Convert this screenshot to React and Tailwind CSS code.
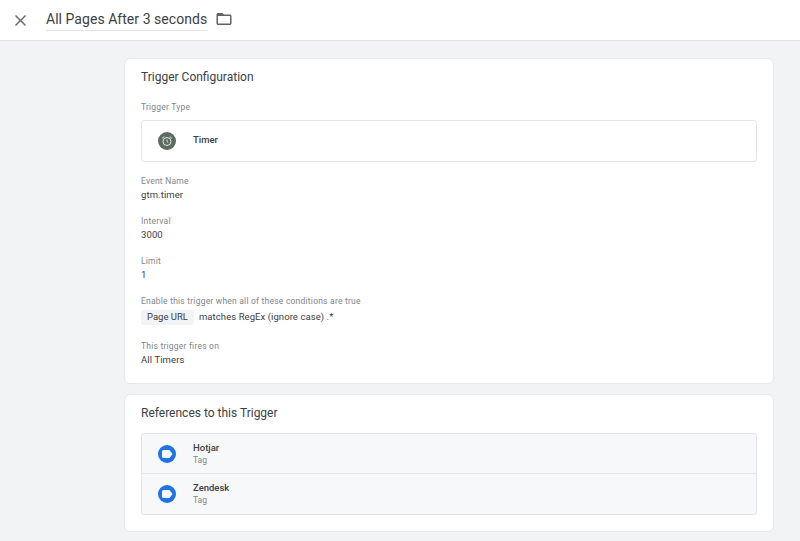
const fields = [
  { label: "Event Name", value: "gtm.timer" },
  { label: "Interval", value: "3000" },
  { label: "Limit", value: "1" },
];

const references = [
  { name: "Hotjar", type: "Tag" },
  { name: "Zendesk", type: "Tag" },
];

const CloseIcon = () => (
  <svg className="ml-[11px] shrink-0" width="19" height="19" viewBox="0 0 24 24" fill="#6b7074">
    <path d="M19 6.41 17.59 5 12 10.59 6.41 5 5 6.41 10.59 12 5 17.59 6.41 19 12 13.41 17.59 19 19 17.59 13.41 12z" />
  </svg>
);

const FolderIcon = () => (
  <svg className="ml-[8px] mb-[3px] shrink-0" width="18" height="18" viewBox="0 0 24 24" fill="#5f6368">
    <path d="M20 6h-8l-2-2H4c-1.1 0-2 .9-2 2v12c0 1.1.9 2 2 2h16c1.1 0 2-.9 2-2V8c0-1.1-.9-2-2-2zm0 12H4V8h16v10z" />
  </svg>
);

const TimerIcon = () => (
  <div className="w-[18px] h-[18px] rounded-full bg-[#5b6b60] flex items-center justify-center">
    <svg width="12" height="12" viewBox="0 0 24 24" fill="none" stroke="#e4e8e5" strokeWidth="2">
      <circle cx="12" cy="13" r="8" />
      <path d="M12 9v4l2.5 2" />
      <path d="M2.5 6.5 6.5 3M21.5 6.5 17.5 3" />
    </svg>
  </div>
);

const TagIcon = () => (
  <div className="w-[18px] h-[18px] rounded-full bg-[#1f73e8] flex items-center justify-center">
    <svg width="12" height="10" viewBox="0 0 12 10">
      <path d="M2.5 1h6L11.5 5l-3 4h-6A1.5 1.5 0 0 1 1 7.5v-5A1.5 1.5 0 0 1 2.5 1z" fill="#f7f8fa" />
    </svg>
  </div>
);

const Label = ({ children }) => (
  <div className="text-[8.5px] leading-[12px] tracking-[0.22px] text-[#80868b]">{children}</div>
);

const Value = ({ children }) => (
  <div className="mt-[1px] text-[9.5px] leading-[14px] tracking-[0.1px] text-[#3c4043]">{children}</div>
);

const App = () => {
  return (
    <div className="w-[800px] h-[541px] overflow-hidden bg-[#f1f3f4] font-['Roboto',sans-serif]">
      {/* Cabecera */}
      <div className="h-[41px] bg-white border-b border-[#e0e2e5] flex items-center">
        <CloseIcon />
        <div className="ml-[16px] self-start mt-[8px] w-[161px] h-[23px] shrink-0 flex items-center border-b border-[#e3e5e8] whitespace-nowrap text-[14px] tracking-[0.04px] text-[#3c4043]">
          All Pages After 3 seconds
        </div>
        <FolderIcon />
      </div>

      <div className="ml-[124px] w-[650px] pt-[17px] flex flex-col gap-[10px]">
        {/* Configuración */}
        <div className="h-[326px] bg-white rounded-[6px] border border-[#e6e8ea] px-[16px] pt-[10px]">
          <div className="text-[12px] leading-[16px] text-[#3c4043]">Trigger Configuration</div>
          <div className="mt-[16px]">
            <Label>Trigger Type</Label>
          </div>
          <div className="mt-[7px] h-[42px] rounded-[3px] border border-[#e3e5e8] flex items-center pl-[16px]">
            <TimerIcon />
            <div className="ml-[17px] mb-[2px] text-[9.5px] font-medium text-[#3c4043]">Timer</div>
          </div>
          <div className="mt-[13px] flex flex-col gap-[13px]">
            {fields.map((field) => (
              <div key={field.label}>
                <Label>{field.label}</Label>
                <Value>{field.value}</Value>
              </div>
            ))}
          </div>
          <div className="mt-[13px]">
            <Label>Enable this trigger when all of these conditions are true</Label>
          </div>
          <div className="mt-[3px] flex items-center">
            <div className="h-[15px] px-[6px] rounded-[2px] bg-[#f1f3f4] flex items-center text-[9.5px] text-[#3c4043]">
              Page URL
            </div>
            <div className="ml-[5px] text-[9.5px] tracking-[0.07px] text-[#3c4043]">matches RegEx (ignore case) .*</div>
          </div>
          <div className="mt-[15px]">
            <Label>This trigger fires on</Label>
            <Value>All Timers</Value>
          </div>
        </div>

        {/* Referencias */}
        <div className="h-[138px] bg-white rounded-[6px] border border-[#e6e8ea] px-[16px] pt-[10px]">
          <div className="text-[12px] leading-[16px] text-[#3c4043]">References to this Trigger</div>
          <div className="mt-[12px] rounded-[3px] border border-[#e3e5e8] bg-[#f7f8fa] divide-y divide-[#e3e5e8]">
            {references.map((ref) => (
              <div key={ref.name} className="h-[40px] flex items-center pl-[16px]">
                <TagIcon />
                <div className="ml-[17px]">
                  <div className="text-[9.5px] leading-[12px] font-medium text-[#3c4043]">{ref.name}</div>
                  <div className="text-[8.5px] leading-[12px] text-[#80868b]">{ref.type}</div>
                </div>
              </div>
            ))}
          </div>
        </div>
      </div>
    </div>
  );
};

export default App;
